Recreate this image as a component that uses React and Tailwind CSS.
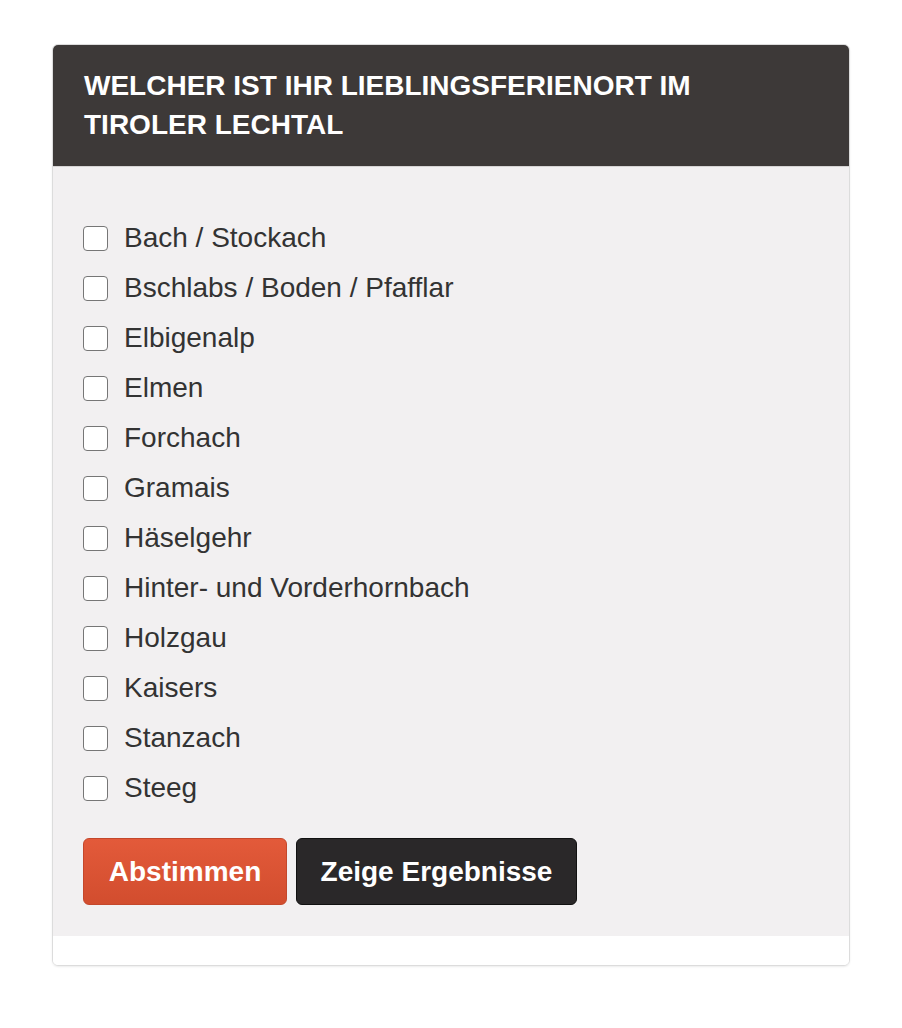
import React from "react";

const places = [
  "Bach / Stockach",
  "Bschlabs / Boden / Pfafflar",
  "Elbigenalp",
  "Elmen",
  "Forchach",
  "Gramais",
  "Häselgehr",
  "Hinter- und Vorderhornbach",
  "Holzgau",
  "Kaisers",
  "Stanzach",
  "Steeg",
];

export default function App() {
  return (
    <div className="min-h-[1028px] bg-white px-[52px] pt-[44px] font-['Liberation_Sans',Arial,sans-serif]">
      <div className="rounded-[6px] border border-[#dcdcdc] shadow-[0_1px_2px_rgba(0,0,0,0.08)] overflow-hidden">
        <div className="bg-[#3d3938] border-b border-[#d6d4d4] pl-[31px] pr-[40px] pt-[21px] pb-[22px]">
          <h2 className="text-[28px] leading-[39px] font-bold text-white uppercase">
            Welcher ist Ihr Lieblingsferienort im Tiroler Lechtal
          </h2>
        </div>
        <div className="bg-[#f2f0f1] pl-[30px] pt-[46px] pb-[31px]">
          <div className="flex flex-col">
            {places.map((p) => (
              <label key={p} className="flex items-center h-[50px] gap-[16px] cursor-pointer">
                <span className="w-[25px] h-[25px] shrink-0 rounded-[4px] border-[1.5px] border-[#767676] bg-white" />
                <span className="text-[28px] text-[#333333]">{p}</span>
              </label>
            ))}
          </div>
          <div className="flex gap-[9px] mt-[25px]">
            <button className="h-[67px] w-[204px] rounded-[6px] border border-[#c4472b] bg-gradient-to-b from-[#e35a3a] to-[#d24d2e] text-white text-[28px] font-bold">
              Abstimmen
            </button>
            <button className="h-[67px] w-[281px] rounded-[6px] border border-[#111] bg-[#2a2829] text-white text-[28px] font-bold">
              Zeige Ergebnisse
            </button>
          </div>
        </div>
        <div className="h-[29px] bg-white" />
      </div>
    </div>
  );
}
